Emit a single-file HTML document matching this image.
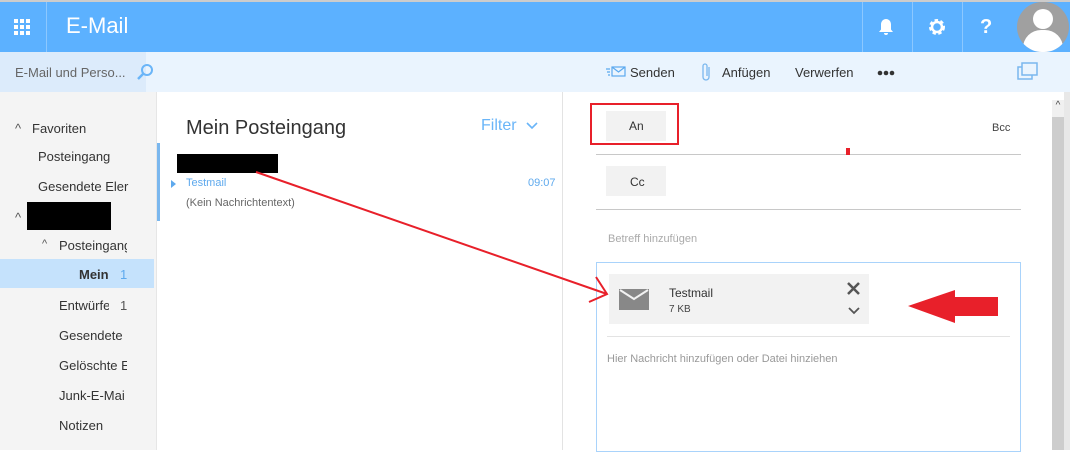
<!DOCTYPE html>
<html><head><meta charset="utf-8"><style>
*{margin:0;padding:0;box-sizing:border-box}
body{width:1070px;height:450px;overflow:hidden;background:#fff;font-family:"Liberation Sans",sans-serif;position:relative;color:#333}
.a{position:absolute}
.t{font-size:13px;white-space:nowrap}
</style></head><body>
<div class="a" style="left:0;top:0;width:1070px;height:2px;background:#ccc"></div>
<div class="a" style="left:0;top:2px;width:1070px;height:50px;background:#5cb1ff"></div>
<div class="a" style="left:46px;top:2px;width:1px;height:50px;background:#8cc8ff"></div>
<svg class="a" style="left:14px;top:19px" width="18" height="18"><g fill="#fff"><rect x="0" y="0" width="4" height="4"/><rect x="6" y="0" width="4" height="4"/><rect x="12" y="0" width="4" height="4"/><rect x="0" y="6" width="4" height="4"/><rect x="6" y="6" width="4" height="4"/><rect x="12" y="6" width="4" height="4"/><rect x="0" y="12" width="4" height="4"/><rect x="6" y="12" width="4" height="4"/><rect x="12" y="12" width="4" height="4"/></g></svg>
<div class="a" style="left:66px;top:13px;font-size:22px;color:#fff">E-Mail</div>
<div class="a" style="left:862px;top:2px;width:1px;height:50px;background:#8cc8ff"></div>
<div class="a" style="left:912px;top:2px;width:1px;height:50px;background:#8cc8ff"></div>
<div class="a" style="left:962px;top:2px;width:1px;height:50px;background:#8cc8ff"></div>
<svg class="a" style="left:876px;top:17px" width="20" height="20"><path d="M10 2c-3 0-5 2.5-5 5.5v5L3 15h14l-2-2.5v-5C15 4.5 13 2 10 2z M8 16h4a2 2 0 0 1-4 0z" fill="#fff"/></svg>
<svg class="a" style="left:927px;top:17px" width="20" height="20"><circle cx="10" cy="10" r="6" fill="none" stroke="#fff" stroke-width="4" stroke-dasharray="3 2.2"/><circle cx="10" cy="10" r="5" fill="none" stroke="#fff" stroke-width="2.5"/></svg>
<div class="a" style="left:980px;top:16px;font-size:20px;font-weight:bold;color:#fff">?</div>
<div class="a" style="left:1017px;top:2px;width:52px;height:50px;border-radius:26px;background:#a0a0a0;overflow:hidden"><div class="a" style="left:16px;top:7px;width:20px;height:20px;border-radius:50%;background:#fff"></div><div class="a" style="left:6px;top:28px;width:40px;height:30px;border-radius:18px 18px 0 0;background:#fff"></div></div>
<div class="a" style="left:0;top:52px;width:1070px;height:40px;background:#eaf4fe"></div>
<div class="a" style="left:0;top:52px;width:146px;height:40px;background:#dcebfb"></div>
<div class="a t" style="left:15px;top:65px;color:#666">E-Mail und Perso...</div>
<svg class="a" style="left:136px;top:63px" width="20" height="18"><circle cx="11" cy="7" r="5" fill="none" stroke="#6ab5f8" stroke-width="2"/><line x1="7.5" y1="10.5" x2="2" y2="16" stroke="#6ab5f8" stroke-width="2.5"/></svg>
<svg class="a" style="left:605px;top:65px" width="22" height="14"><g stroke="#5ba9ef" stroke-width="1.2" fill="none"><rect x="7" y="2" width="13" height="9"/><path d="M7 2l6.5 5 6.5-5"/><path d="M1 4h4M2 7h3M3 10h2"/></g></svg>
<div class="a t" style="left:630px;top:65px;color:#333">Senden</div>
<svg class="a" style="left:701px;top:62px" width="12" height="20"><path d="M8 5v10a3 3 0 0 1-6 0V4a2 2 0 0 1 4 0v10" fill="none" stroke="#7ab7ee" stroke-width="1.3"/></svg>
<div class="a t" style="left:722px;top:65px;color:#333">Anfügen</div>
<div class="a t" style="left:795px;top:65px;color:#333">Verwerfen</div>
<svg class="a" style="left:877px;top:70px" width="18" height="6"><circle cx="3" cy="3" r="2.3" fill="#333"/><circle cx="9" cy="3" r="2.3" fill="#333"/><circle cx="15" cy="3" r="2.3" fill="#333"/></svg>
<svg class="a" style="left:1017px;top:62px" width="22" height="20"><rect x="1" y="5" width="14" height="12" fill="none" stroke="#7ab7ee" stroke-width="1.5"/><rect x="5" y="1" width="15" height="12" fill="#eaf4fe" stroke="#7ab7ee" stroke-width="1.5"/></svg>
<div class="a" style="left:0;top:92px;width:156px;height:358px;background:#f4f4f4"></div>
<div class="a" style="left:156px;top:92px;width:1px;height:358px;background:#e6e6e6"></div>
<div class="a t" style="left:15px;top:121px;color:#555">^</div>
<div class="a t" style="left:32px;top:121px">Favoriten</div>
<div class="a t" style="left:38px;top:149px">Posteingang</div>
<div class="a t" style="left:38px;top:179px">Gesendete Eler</div>
<div class="a t" style="left:15px;top:210px;color:#555">^</div>
<div class="a" style="left:27px;top:202px;width:84px;height:28px;background:#000"></div>
<div class="a t" style="left:42px;top:238px;color:#555;font-size:11px">^</div>
<div class="a t" style="left:59px;top:238px;width:68px;overflow:hidden">Posteingang</div>
<div class="a" style="left:0;top:259px;width:154px;height:29px;background:#c5e2fc"></div>
<div class="a t" style="left:79px;top:267px;font-weight:bold">Mein</div>
<div class="a t" style="left:120px;top:267px;color:#5ea9ed">1</div>
<div class="a t" style="left:59px;top:298px;width:50px;overflow:hidden">Entwürfe</div>
<div class="a t" style="left:120px;top:298px;color:#555">1</div>
<div class="a t" style="left:59px;top:328px;width:68px;overflow:hidden">Gesendete</div>
<div class="a t" style="left:59px;top:358px;width:68px;overflow:hidden">Gelöschte E</div>
<div class="a t" style="left:59px;top:388px;width:68px;overflow:hidden">Junk-E-Mai</div>
<div class="a t" style="left:59px;top:418px">Notizen</div>
<div class="a" style="left:186px;top:117px;font-size:20px;color:#333">Mein Posteingang</div>
<div class="a" style="left:481px;top:117px;font-size:16px;color:#6ab5f8">Filter</div>
<svg class="a" style="left:526px;top:121px" width="12" height="10"><path d="M1 2l5 5 5-5" fill="none" stroke="#6ab5f8" stroke-width="1.6"/></svg>
<div class="a" style="left:157px;top:143px;width:3px;height:78px;background:#7ab7ee"></div>
<div class="a" style="left:177px;top:154px;width:101px;height:19px;background:#000"></div>
<svg class="a" style="left:171px;top:180px" width="6" height="8"><path d="M0 0l5 4-5 4z" fill="#5ea9ed"/></svg>
<div class="a" style="left:186px;top:177px;font-size:11px;color:#5ea9ed">Testmail</div>
<div class="a" style="left:528px;top:177px;font-size:11px;color:#5ea9ed">09:07</div>
<div class="a" style="left:186px;top:197px;font-size:11px;color:#666">(Kein Nachrichtentext)</div>
<div class="a" style="left:562px;top:92px;width:1px;height:358px;background:#e3e3e3"></div>
<div class="a" style="left:1052px;top:100px;width:12px;height:350px;background:#cdcdcd"></div>
<div class="a" style="left:1052px;top:100px;width:12px;height:17px;background:#f0f0f0;font-size:10px;text-align:center;color:#444">^</div>
<div class="a" style="left:1064px;top:92px;width:6px;height:358px;background:#e8e8e8"></div>
<div class="a" style="left:606px;top:111px;width:60px;height:30px;background:#f2f2f2"></div>
<div class="a" style="left:590px;top:103px;width:89px;height:42px;border:2px solid #e8202a"></div>
<div class="a" style="left:629px;top:119px;font-size:12px">An</div>
<div class="a" style="left:992px;top:122px;font-size:11px;color:#444">Bcc</div>
<div class="a" style="left:596px;top:154px;width:425px;height:1px;background:#c8c8c8"></div>
<div class="a" style="left:846px;top:148px;width:4px;height:7px;background:#e8202a"></div>
<div class="a" style="left:606px;top:166px;width:60px;height:30px;background:#f2f2f2"></div>
<div class="a" style="left:630px;top:175px;font-size:12px">Cc</div>
<div class="a" style="left:596px;top:209px;width:425px;height:1px;background:#c8c8c8"></div>
<div class="a" style="left:608px;top:233px;font-size:11px;color:#aaa">Betreff hinzufügen</div>
<div class="a" style="left:596px;top:262px;width:425px;height:190px;border:1px solid #a9d3fb"></div>
<div class="a" style="left:609px;top:274px;width:260px;height:50px;background:#f2f2f2"></div>
<svg class="a" style="left:619px;top:289px" width="30" height="21"><rect width="30" height="21" fill="#888"/><path d="M1 1l14 9 14-9" fill="none" stroke="#f2f2f2" stroke-width="2"/></svg>
<div class="a" style="left:669px;top:286px;font-size:12px;color:#333">Testmail</div>
<div class="a" style="left:669px;top:304px;font-size:10px;color:#444">7 KB</div>
<svg class="a" style="left:847px;top:282px" width="13" height="13"><path d="M1 1l11 11M12 1L1 12" stroke="#555" stroke-width="2.5"/></svg>
<svg class="a" style="left:848px;top:307px" width="12" height="8"><path d="M1 1l5 5 5-5" fill="none" stroke="#555" stroke-width="1.8"/></svg>
<div class="a" style="left:607px;top:336px;width:403px;height:1px;background:#e3e3e3"></div>
<div class="a" style="left:607px;top:353px;font-size:11px;color:#999">Hier Nachricht hinzufügen oder Datei hinziehen</div>
<svg class="a" style="left:0;top:0" width="1070" height="450"><g stroke="#e8202a" stroke-width="2" fill="none"><line x1="256" y1="172" x2="607" y2="294"/><path d="M596 277l11 17-18 8"/></g><path d="M908 306l47-16v7h43v19h-43v7z" fill="#e8202a"/></svg>
</body></html>
